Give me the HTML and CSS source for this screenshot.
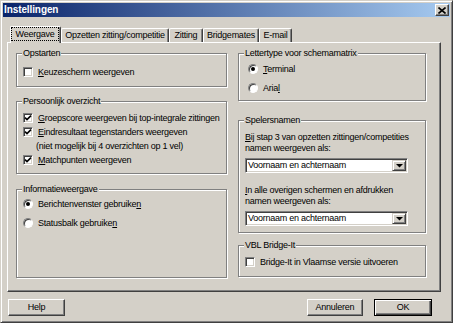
FILE: index.html
```html
<!DOCTYPE html>
<html lang="nl">
<head>
<meta charset="utf-8">
<title>Instellingen</title>
<link rel="stylesheet" href="styles.css">
</head>
<body>
<div class="window">
  <div class="titlebar">
    <span class="title">Instellingen</span>
    <span class="close"><svg width="8" height="7" viewBox="0 0 8 7"><path d="M0.5 0.5 L7.5 6.5 M7.5 0.5 L0.5 6.5" stroke="#000" stroke-width="1.6"/></svg></span>
  </div>
  <div class="body">
    <div class="tabs">
      <div class="tab active t-weergave"><span class="focus">Weergave</span></div>
      <div class="tab t-opzetten">Opzetten zitting/competitie</div>
      <div class="tab t-zitting">Zitting</div>
      <div class="tab t-bridgemates">Bridgemates</div>
      <div class="tab t-email">E-mail</div>
    </div>
    <div class="panel">
      <div class="col">
        <div class="group g-opstarten">
          <div class="legend">Opstarten</div>
          <div class="rows r-opstarten">
            <div class="row"><span class="cb"></span><span><u>K</u>euzescherm weergeven</span></div>
          </div>
        </div>
        <div class="group g-persoonlijk">
          <div class="legend">Persoonlijk overzicht</div>
          <div class="rows r-persoonlijk">
            <div class="row"><span class="cb"><svg width="8" height="8" viewBox="0 0 8 8"><path d="M1 3.6 L3 5.6 L7 1.6" fill="none" stroke="#000" stroke-width="1.6"/></svg></span><span><u>G</u>roepscore weergeven bij top-integrale zittingen</span></div>
            <div class="row"><span class="cb"><svg width="8" height="8" viewBox="0 0 8 8"><path d="M1 3.6 L3 5.6 L7 1.6" fill="none" stroke="#000" stroke-width="1.6"/></svg></span><span><u>E</u>indresultaat tegenstanders weergeven</span></div>
            <div class="row indent"><span>(niet mogelijk bij 4 overzichten op 1 vel)</span></div>
            <div class="row"><span class="cb"><svg width="8" height="8" viewBox="0 0 8 8"><path d="M1 3.6 L3 5.6 L7 1.6" fill="none" stroke="#000" stroke-width="1.6"/></svg></span><span><u>M</u>atchpunten weergeven</span></div>
          </div>
        </div>
        <div class="group g-info">
          <div class="legend">Informatieweergave</div>
          <div class="rows r-info">
            <div class="row"><span class="rb on"></span><span>Berichtenvenster gebruike<u>n</u></span></div>
            <div class="row"><span class="rb"></span><span>Statusbalk gebruike<u>n</u></span></div>
          </div>
        </div>
      </div>
      <div class="col">
        <div class="group g-letter">
          <div class="legend">Lettertype voor schemamatrix</div>
          <div class="rows r-letter">
            <div class="row radio-in"><span class="rb on"></span><span><u>T</u>erminal</span></div>
            <div class="row radio-in"><span class="rb"></span><span>Aria<u>l</u></span></div>
          </div>
        </div>
        <div class="group g-spelers">
          <div class="legend">Spelersnamen</div>
          <div class="label l-first"><u>B</u>ij stap 3 van opzetten zittingen/competities<br>namen weergeven als:</div>
          <div class="combo"><span>Voornaam en achternaam</span><span class="drop"><svg width="7" height="4" viewBox="0 0 7 4"><path d="M0 0 H7 L3.5 3.5 Z" fill="#000"/></svg></span></div>
          <div class="label l-second"><u>I</u>n alle overigen schermen en afdrukken<br>namen weergeven als:</div>
          <div class="combo"><span>Voornaam en achternaam</span><span class="drop"><svg width="7" height="4" viewBox="0 0 7 4"><path d="M0 0 H7 L3.5 3.5 Z" fill="#000"/></svg></span></div>
        </div>
        <div class="group g-vbl">
          <div class="legend">VBL Bridge-It</div>
          <div class="rows r-vbl">
            <div class="row"><span class="cb"></span><span>Bridge-It in Vlaamse versie uitvoeren</span></div>
          </div>
        </div>
      </div>
    </div>
    <div class="buttons">
      <div class="btn b-help">Help</div>
      <div class="spacer"></div>
      <div class="btn b-cancel">Annuleren</div>
      <div class="btn default b-ok">OK</div>
    </div>
  </div>
</div>
</body>
</html>
```
FILE: styles.css
```css
* { box-sizing: border-box; }
html, body { margin: 0; padding: 0; }
body {
  width: 453px;
  height: 323px;
  overflow: hidden;
  background: #D4D0C8;
  font: 9px/11px "Liberation Sans", Arial, sans-serif;
  letter-spacing: -0.25px;
  color: #000;
}
u { text-decoration: underline; text-underline-offset: 1px; }

.window {
  width: 453px;
  height: 323px;
  border: 1px solid;
  border-color: #D4D0C8 #404040 #404040 #D4D0C8;
  box-shadow: inset 1px 1px #fff, inset -1px -1px #808080;
  padding: 2px;
  background: #D4D0C8;
  display: flex;
  flex-direction: column;
}

.titlebar {
  height: 14px;
  flex: none;
  background: linear-gradient(to right, #0A246A, #A6CAF0);
  display: flex;
  align-items: center;
  justify-content: space-between;
  padding-left: 1px;
}
.title {
  color: #fff;
  font-weight: bold;
  font-size: 10px;
  letter-spacing: -0.1px;
  line-height: 14px;
}
.close {
  width: 14px;
  height: 12px;
  margin-right: 1px;
  background: #D4D0C8;
  border: 1px solid;
  border-color: #fff #404040 #404040 #fff;
  box-shadow: inset -1px -1px #808080;
  display: flex;
  align-items: center;
  justify-content: center;
}

.body {
  flex: 1;
  padding: 9px 0 0 4px;
}

.tabs {
  display: flex;
  align-items: flex-end;
  height: 16px;
  padding-left: 3px;
  position: relative;
  z-index: 1;
}
.tab {
  height: 14px;
  border: 1px solid;
  border-bottom: 0;
  border-color: #fff #404040 #fff #fff;
  box-shadow: inset -1px 0 #808080;
  border-radius: 2px 2px 0 0;
  display: flex;
  align-items: center;
  justify-content: center;
  white-space: nowrap;
  background: #D4D0C8;
}
.tab.active {
  height: 17px;
  margin-bottom: -1px;
  padding: 0 1px 2px 0;
}
.focus {
  flex: 1;
  align-self: stretch;
  border: 1px dotted #000;
  display: flex;
  align-items: center;
  justify-content: center;
}
.t-weergave { width: 51px; }
.t-opzetten { width: 108px; }
.t-zitting { width: 34px; }
.t-bridgemates { width: 56px; }
.t-email { width: 33px; }

.panel {
  width: 434px;
  height: 250px;
  border: 1px solid;
  border-color: #fff #404040 #404040 #fff;
  box-shadow: inset -1px -1px #808080;
  padding: 10px 0 0 8px;
  display: grid;
  grid-template-columns: 211px 188px;
  column-gap: 11px;
  align-items: start;
}

.group {
  border: 1px solid #808080;
  box-shadow: 1px 1px 0 #fff, inset 1px 1px 0 #fff;
  padding: 0 6px;
}
.legend {
  display: table;
  margin: -7px 0 0 -1px;
  padding: 0 1px;
  line-height: 13px;
  background: #D4D0C8;
  white-space: nowrap;
}

.g-opstarten { height: 34px; }
.g-persoonlijk { height: 73px; margin-top: 14px; }
.g-info { height: 89px; margin-top: 15px; }
.g-letter { height: 48px; }
.g-spelers { height: 113px; margin-top: 19px; }
.g-vbl { height: 32px; margin-top: 12px; }

.r-opstarten { margin-top: 5px; }
.r-persoonlijk { margin-top: 3px; }
.r-info { margin-top: 1px; display: flex; flex-direction: column; gap: 5px; }
.r-letter { margin-top: 2px; display: flex; flex-direction: column; gap: 5px; }
.r-vbl { margin-top: 3px; }

.row {
  display: flex;
  align-items: center;
  height: 14px;
  white-space: nowrap;
}
.row.indent { padding-left: 13px; }
.row.radio-in { padding-left: 3px; }

.cb {
  flex: none;
  width: 10px;
  height: 10px;
  margin-right: 5px;
  background: #fff;
  border: 1px solid;
  border-color: #808080 #fff #fff #808080;
  box-shadow: inset 1px 1px #404040, inset -1px -1px #D4D0C8;
  display: flex;
  align-items: center;
  justify-content: center;
}
.rb {
  flex: none;
  width: 10px;
  height: 10px;
  margin-right: 5px;
  border-radius: 50%;
  background: #fff;
  border: 1px solid;
  border-color: #808080 #fff #fff #808080;
  box-shadow: inset 1px 1px #404040;
  display: flex;
  align-items: center;
  justify-content: center;
}
.rb.on::after {
  content: "";
  width: 4px;
  height: 4px;
  border-radius: 50%;
  background: #000;
}

.label { white-space: nowrap; line-height: 11px; }
.l-first { margin-top: 5px; }
.l-second { margin-top: 12px; }

.combo {
  margin-top: 4px;
  width: 163px;
  height: 15px;
  background: #fff;
  border: 1px solid;
  border-color: #808080 #fff #fff #808080;
  box-shadow: inset 1px 1px #404040, inset -1px -1px #D4D0C8;
  display: flex;
  align-items: center;
  padding: 1px 1px 1px 1px;
  white-space: nowrap;
}
.combo > span:first-child { padding-left: 1px; }
.drop {
  margin-left: auto;
  width: 14px;
  height: 11px;
  background: #D4D0C8;
  border: 1px solid;
  border-color: #D4D0C8 #404040 #404040 #D4D0C8;
  box-shadow: inset 1px 1px #fff, inset -1px -1px #808080;
  display: flex;
  align-items: center;
  justify-content: center;
}

.buttons {
  display: flex;
  margin-top: 7px;
  padding: 0 18px 0 1px;
}
.spacer { flex: 1; }
.btn {
  height: 17px;
  background: #D4D0C8;
  border: 1px solid;
  border-color: #fff #404040 #404040 #fff;
  box-shadow: inset -1px -1px #808080;
  display: flex;
  align-items: center;
  justify-content: center;
}
.btn.default {
  border-color: #000;
  box-shadow: inset 1px 1px #fff, inset -1px -1px #404040, inset -2px -2px #808080;
}
.b-help { width: 57px; }
.b-cancel { width: 56px; }
.b-ok { width: 58px; margin-left: 11px; }
```
